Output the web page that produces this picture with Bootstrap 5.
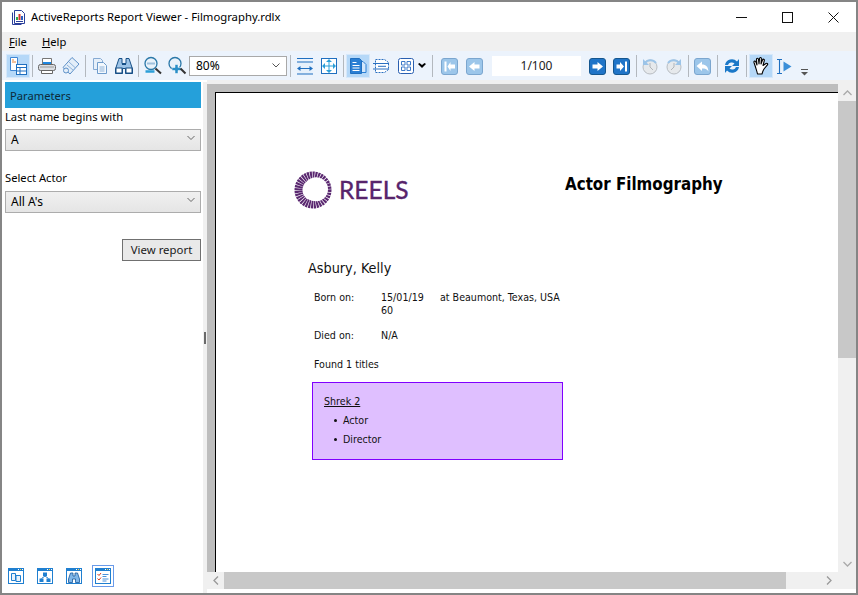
<!DOCTYPE html>
<html lang="en"><head><meta charset="utf-8"><title>ActiveReports Report Viewer</title>
<link href="https://cdn.jsdelivr.net/npm/bootstrap@5.3.0/dist/css/bootstrap.min.css" rel="stylesheet">
<style>
html,body{height:100%;margin:0;overflow:hidden}
body{background:#fff;color:#000;font:11.2px/16px "Noto Sans",sans-serif}
.win{height:595px;width:858px;border:2px solid #858585}
.titlebar{height:30px;padding-left:9px}
.titlebar .ttl{margin-left:5px;font-size:11.3px;color:#000}
.wbtn{width:46px;height:30px}
.menubar{height:19px;background:#f0f0f0;padding-left:7px;gap:15px}
.menubar u{text-underline-offset:1px}
.tools{height:29px;background:#ecf3fc;padding-left:4px}
.tb{width:24px;height:24px;flex:none}
.tb svg{width:20px;height:20px}
.tb.on{background:#b5d8f8;border:1px solid #d6e8fa}
.sp{flex:none;width:5px;height:24px}
.sp i{display:block;width:1px;height:22px;background:#b3b8be}
.sp4{width:4px}
.sp6{width:6px}
.zoomsel{width:98px;height:20px;background:#fff;border:1px solid #a9a9a9;padding:0 6px;flex:none;font-size:12px}
.pageno{width:89px;height:20px;line-height:20px;background:#fff;margin:0 5px 0 5px;flex:none;color:#222;font-size:12px}
.caret{width:14px;height:24px;flex:none;margin-left:-3px}
.navfirst{margin-left:3px}
.navprev{margin-left:1px}
.ovr{width:14px;margin-top:13px;flex:none;margin-left:4px}
.mainrow{height:510px}
.side{width:201px;flex:none;padding:2px 2px 0 3px}
.phead{height:26px;background:#25a0da;padding:1px 0 0 5px;color:#0e2a38;font-size:11.2px}
.lbl{height:19px;line-height:18px}
.combo{height:22px;border:1px solid #acacac;background:linear-gradient(#f0f0f0,#e5e5e5);padding:0 5px;font-size:12px}
.combo svg{width:8px;height:6px;margin-top:-4px}
.cb1{margin-top:2px}
.lb2{margin-top:18px}
.cb2{margin-top:3px}
.btnrow{margin-top:26px}
.vbtn{border:1px solid #707070;background:#e9e9e9;height:22px;width:79px;line-height:20px;text-align:center;color:#1a1a1a;font-size:11.4px}
.gripcol{width:4px;flex:none;background:#f0f0f0;margin-top:2px}
.grip{width:2px;height:12px;background:#6a6a6a;margin-left:1px}
.bicons{margin-top:auto;padding:0 0 4px 3px;height:30px;gap:13px}
.bi{width:16px;height:16px;flex:none}
.bi svg,.bion svg{width:16px;height:16px;display:block}
.bion{width:22px;height:22px;border:1px solid #6a9bea;background:#fff;flex:none;margin-left:-3px}
.viewer{min-width:0;padding-top:4px;background:#f0f0f0}
.vwrap{min-height:0}
.canvas{background:#bdbdbd;padding:8px 0 0 8px;overflow:hidden;min-height:0}
.sheet{background:#fff;border:solid #000;border-width:1px 0 0 1px;height:100%;padding:74px 0 0 78px;font-family:"DejaVu Sans Condensed","DejaVu Sans",sans-serif;font-size:10.6px;line-height:13px;color:#111}
.rhead{height:46px}
.logo{width:38px;height:38px;flex:none}
.reels{font:24.5px/30px "Lato",sans-serif;color:#57246b;margin-left:7px;width:69px;-webkit-text-stroke:.35px #57246b}
.rtitle{font:bold 16.8px/20px "DejaVu Sans Condensed",sans-serif;color:#000;margin-left:157px;margin-top:-12px}
.rname{font-size:14.3px;line-height:20px;margin:45px 0 0 14px;color:#111}
.facts{margin:13px 0 0 20px;width:260px}
.facts2{margin-top:12px}
.k{width:67px;flex:none}
.v1{width:59px;flex:none}
.found{margin:16px 0 0 20px}
.pbox{margin:11px 0 0 18px;width:251px;height:78px;background:#dfbfff;border:1px solid #8000ff;padding:12px 0 0 11px}
.pbox ul{margin:6px 0 0;padding:0 0 0 19px;list-style:none}
.pbox li{height:19px;line-height:13px;position:relative}
.pbox li::before{content:"";position:absolute;left:-9px;top:5px;width:3px;height:3px;border-radius:50%;background:#111}
.sv{width:18px;flex:none;background:#f0f0f0}
.sv .ar{height:17px}
.sv .th{height:257px;background:#c8c8c8}
.sh{height:17px;background:#f0f0f0}
.sh .th{width:562px;height:17px;background:#c8c8c8}
.sh .ar{width:17px}
.shr{margin-right:6px}
.foot{height:4px}
</style></head><body>
<svg width="0" height="0" class="d-none"><defs>
<symbol id="bwin" viewBox="0 0 16 16"><rect x=".5" y=".5" width="15" height="15" fill="#fff" stroke="#1f7fd0"/><rect x="0" y="0" width="16" height="3" fill="#1f7fd0"/><rect x="10" y="1" width="1" height="1" fill="#fff"/><rect x="12" y="1" width="1" height="1" fill="#f5d04a"/><rect x="14" y="1" width="1" height="1" fill="#fff"/></symbol>
</defs></svg>
<div class="win d-flex flex-column">
 <div class="titlebar d-flex align-items-center">
  <svg width="15" height="16" viewBox="0 0 15 16"><path d="M3.500 1.500h7l3 3v10h-10z" fill="#fff" stroke="#2a3f9a"/><path d="M1.500 3.500v12h9" fill="none" stroke="#2a3f9a"/><rect x="5" y="8" width="2" height="3" fill="#2fa84a"/><rect x="7.500" y="5" width="2" height="6" fill="#d8352a"/><rect x="10" y="7" width="2" height="4" fill="#2a5fc0"/><path d="M5 12.500h7" stroke="#2a3f9a"/></svg>
  <span class="ttl">ActiveReports Report Viewer - Filmography.rdlx</span>
  <div class="ms-auto d-flex">
   <div class="wbtn d-flex align-items-center justify-content-center"><svg width="11" height="11"><path d="M0 5.500h11" stroke="#111"/></svg></div>
   <div class="wbtn d-flex align-items-center justify-content-center"><svg width="11" height="11"><rect x=".5" y=".5" width="10" height="10" fill="none" stroke="#111"/></svg></div>
   <div class="wbtn d-flex align-items-center justify-content-center"><svg width="11" height="11"><path d="M.5.500l10 10M10.500.500l-10 10" stroke="#111"/></svg></div>
  </div>
 </div>
 <div class="menubar d-flex align-items-center"><span><u>F</u>ile</span><span><u>H</u>elp</span></div>
 <div class="tools d-flex align-items-center">
  <div class="tb on d-flex align-items-center justify-content-center"><svg viewBox="0 0 20 20"><path d="M2.500 1.500h7v13h-7z" fill="#fff" stroke="#3f86d4"/><path d="M4 4h2M4 6h4" stroke="#e8843a"/><rect x="8.500" y="8.500" width="10" height="10" fill="#fff" stroke="#1f6fc0"/><path d="M8.500 11.500h10M12 11.500v7M8.500 15h10" stroke="#1f6fc0"/></svg></div>
  <div class="sp d-flex justify-content-center align-items-center"><i></i></div>
  <div class="tb d-flex align-items-center justify-content-center"><svg viewBox="0 0 20 20"><path d="M5.500 2.500h9v6h-9z" fill="#fff" stroke="#777"/><path d="M6 6h8v2H6z" fill="#1c86e0"/><rect x="1.500" y="8.500" width="17" height="6" rx="2" fill="#dcdfe3" stroke="#666"/><path d="M4.500 14.500h11v3h-11z" fill="#fff" stroke="#666"/><path d="M3 11h14" stroke="#999"/></svg></div>
  <div class="tb d-flex align-items-center justify-content-center"><svg viewBox="0 0 20 20"><path d="M11 1.500l7 6.500-9 10-7-6.500z" fill="#e3eef9" stroke="#5d90c8"/><path d="M8 6l6 5.500M6 9l6 5" stroke="#8db2da"/><circle cx="5" cy="14.500" r="2.500" fill="#e3eef9" stroke="#5d90c8"/></svg></div>
  <div class="sp d-flex justify-content-center align-items-center"><i></i></div>
  <div class="tb d-flex align-items-center justify-content-center"><svg viewBox="0 0 20 20"><path d="M3.500 2.500h7l2 2v9h-9z" fill="#e6eff9" stroke="#86aad3"/><path d="M7.500 6.500h6l3 3v8h-9z" fill="#f3f8fd" stroke="#6f9ccc"/><path d="M9.500 11h5M9.500 13h5M9.500 15h5" stroke="#8fb2d8"/></svg></div>
  <div class="tb d-flex align-items-center justify-content-center"><svg viewBox="0 0 20 20"><path d="M5 2.500h3v5h4v-5h3l3.500 10.500v4.500h-7v-5h-3v5h-7V13z" fill="#9dc4e8" stroke="#164f86"/><rect x="2" y="12" width="6" height="5" fill="#fff" stroke="#164f86"/><rect x="12" y="12" width="6" height="5" fill="#fff" stroke="#164f86"/><path d="M8 8.500h4" stroke="#164f86"/></svg></div>
  <div class="sp d-flex justify-content-center align-items-center"><i></i></div>
  <div class="tb d-flex align-items-center justify-content-center"><svg viewBox="0 0 20 20"><circle cx="8" cy="7.500" r="6" fill="#e9f2fa" stroke="#2b78a8" stroke-width="1.300"/><path d="M4 6.500h8v2H4z" fill="#9ec0dd"/><path d="M2.500 15.500h9" stroke="#2c9fd8" stroke-width="2.500"/><path d="M12.500 12.500l5.500 5" stroke="#333" stroke-width="2"/></svg></div>
  <div class="tb d-flex align-items-center justify-content-center"><svg viewBox="0 0 20 20"><circle cx="8" cy="7.500" r="6" fill="#e9f2fa" stroke="#2b78a8" stroke-width="1.300"/><path d="M5 11.500h3v-3h3v3h3v3h-3v3H8v-3H5z" fill="#2a8fc8" stroke="#fff" stroke-width=".5"/><path d="M13.500 12.500l5 5" stroke="#333" stroke-width="2"/></svg></div>
  <div class="zoomsel d-flex align-items-center justify-content-between"><span>80%</span><svg width="8" height="5"><path d="M.5.500L4 4 7.500.500" fill="none" stroke="#555"/></svg></div>
  <div class="sp sp6 d-flex justify-content-center align-items-center"><i></i></div>
  <div class="tb d-flex align-items-center justify-content-center"><svg viewBox="0 0 20 20"><rect x="2.500" y="5" width="15" height="13" fill="#e6f0fb"/><path d="M2 2.500h16M2 6h16M2 18h16" stroke="#1f6fc0" stroke-width="1.200"/><path d="M3 12.500h14" stroke="#1f6fc0"/><path d="M2 12.500l3.500-2.500v5zM18 12.500l-3.500-2.500v5z" fill="#1f6fc0"/></svg></div>
  <div class="tb d-flex align-items-center justify-content-center"><svg viewBox="0 0 20 20"><rect x="2.500" y="2.500" width="15" height="15" fill="#fff" stroke="#1f6fc0"/><path d="M10 3l3 3H7zM10 17l3-3H7zM3 10l3-3v6zM17 10l-3-3v6z" fill="#2c9fd8"/><path d="M6 10h8M10 6v8" stroke="#2c9fd8"/></svg></div>
  <div class="sp d-flex justify-content-center align-items-center"><i></i></div>
  <div class="tb on d-flex align-items-center justify-content-center"><svg viewBox="0 0 20 20"><path d="M12 5.500h3l3 3v8h-6z" fill="#d3e7fb" stroke="#2a7fd4"/><path d="M2.500 2.500h9l2 2v13h-11z" fill="#2a7fd4" stroke="#1f6fc0"/><path d="M4.500 6.500h4M4.500 9.500h7M4.500 12h7M4.500 14.500h7" stroke="#fff"/></svg></div>
  <div class="tb d-flex align-items-center justify-content-center"><svg viewBox="0 0 20 20"><path d="M3.500 3.500h9l4 3v7l-4 3h-9z" fill="#fff" stroke="#2a6fc0" stroke-dasharray="2 1"/><path d="M1 7.500h16M1 13h16M6 10.300h8" stroke="#2a6fc0"/></svg></div>
  <div class="tb d-flex align-items-center justify-content-center"><svg viewBox="0 0 20 20"><rect x="2.500" y="2.500" width="15" height="15" rx="2" fill="#fff" stroke="#2a5fb0"/><path d="M5.500 5.500h3.500v3.500H5.500zM11 5.500h3.500v3.500H11zM5.500 11h3.500v3.500H5.500zM11 11h3.500v3.500H11z" fill="#fff" stroke="#3c78c8"/></svg></div>
  <div class="caret d-flex align-items-center justify-content-center"><svg width="8" height="6"><path d="M0 1l4 4 4-4-1.500-1L4 2 1.500 0z" fill="#000"/></svg></div>
  <div class="sp sp6 d-flex justify-content-center align-items-center"><i></i></div>
  <div class="tb navfirst d-flex align-items-center justify-content-center"><svg viewBox="0 0 20 20"><rect x="1.500" y="2.500" width="16" height="16" rx="2.500" fill="#9cc6ea" stroke="#7ba6cf"/><path d="M4.500 5.500h2v10h-2zM15 8.500v4h-4.500V15L7.500 10.500l3-4.500v2.500z" fill="#fff"/></svg></div>
  <div class="tb navprev d-flex align-items-center justify-content-center"><svg viewBox="0 0 20 20"><rect x="1.500" y="2.500" width="16" height="16" rx="2.500" fill="#9cc6ea" stroke="#7ba6cf"/><path d="M4 10.500L9.500 6v2.500h5v4h-5V15z" fill="#fff"/></svg></div>
  <div class="pageno text-center">1/100</div>
  <div class="tb d-flex align-items-center justify-content-center"><svg viewBox="0 0 20 20"><rect x="1.500" y="2.500" width="16" height="16" rx="2.500" fill="#1f74c8" stroke="#14568f"/><path d="M15 10.500L9.500 6v2.500h-5v4h5V15z" fill="#fff"/></svg></div>
  <div class="tb d-flex align-items-center justify-content-center"><svg viewBox="0 0 20 20"><rect x="1.500" y="2.500" width="16" height="16" rx="2.500" fill="#1f74c8" stroke="#14568f"/><path d="M13 5.500h2v10h-2zM12 10.500L8 6v2.500H4.500v4H8V15z" fill="#fff"/></svg></div>
  <div class="sp sp4 d-flex justify-content-center align-items-center"><i></i></div>
  <div class="tb d-flex align-items-center justify-content-center"><svg viewBox="0 0 20 20"><circle cx="10" cy="11" r="7" fill="#e6e9ec" stroke="#b8bdc2"/><path d="M3 3v6h6z" fill="#9cc4e8"/><path d="M5 7a7 7 0 0 1 11 0" fill="none" stroke="#9cc4e8" stroke-width="2"/><path d="M10 7v4l3 3" stroke="#b0b4b8" fill="none"/></svg></div>
  <div class="tb d-flex align-items-center justify-content-center"><svg viewBox="0 0 20 20"><circle cx="10" cy="11" r="7" fill="#e6e9ec" stroke="#b8bdc2"/><path d="M17 3v6h-6z" fill="#9cc4e8"/><path d="M4 7a7 7 0 0 1 11 0" fill="none" stroke="#9cc4e8" stroke-width="2"/><path d="M10 7v4l-3 3" stroke="#b0b4b8" fill="none"/></svg></div>
  <div class="sp d-flex justify-content-center align-items-center"><i></i></div>
  <div class="tb d-flex align-items-center justify-content-center"><svg viewBox="0 0 20 20"><rect x="1.500" y="2.500" width="16" height="16" rx="2.500" fill="#9cc6ea" stroke="#7ba6cf"/><path d="M3.500 10L9 5.500v3c4 0 6 2 6.500 7-1.500-2.500-3.500-3-6.500-3V15z" fill="#fff"/></svg></div>
  <div class="sp d-flex justify-content-center align-items-center"><i></i></div>
  <div class="tb d-flex align-items-center justify-content-center"><svg viewBox="0 0 20 20"><path d="M3 9a7 7 0 0 1 12-3.500L17 3v7h-7l2.500-2.500A4 4 0 0 0 6 9z" fill="#1a78c8"/><path d="M17 11a7 7 0 0 1-12 3.500L3 17v-7h7l-2.500 2.500A4 4 0 0 0 14 11z" fill="#1a78c8"/></svg></div>
  <div class="sp d-flex justify-content-center align-items-center"><i></i></div>
  <div class="tb on d-flex align-items-center justify-content-center"><svg viewBox="0 0 20 20"><path d="M4.500 11L3 6.500c-.4-1.500 1.300-2 1.800-.6L6 9 5.500 3.500c-.1-1.600 1.800-1.700 2-.1L8 8l.5-5.500c.2-1.500 2-1.300 1.900.2L10 8l1.500-4c.5-1.400 2.200-.8 1.800.6L12 9.500l3-2c1.300-.8 2.300.7 1.200 1.700L13 13c-1 1.500-1.500 3-2 5H6.500c-.5-2.500-1.200-4.500-2-7z" fill="#fff" stroke="#000" stroke-width="1.100" stroke-linejoin="round"/></svg></div>
  <div class="tb d-flex align-items-center justify-content-center"><svg viewBox="0 0 20 20"><path d="M2 3.500h5M2 17.500h5M4.500 3.500v14" fill="none" stroke="#1f6fc0" stroke-width="1.100"/><path d="M8.500 5.500l8 5-8 5z" fill="#3c8fd8"/></svg></div>
  <div class="ovr"><svg width="7" height="7" class="d-block"><path d="M0 .5h7" stroke="#555"/><path d="M0 3l3.500 3.500L7 3z" fill="#555"/></svg></div>
 </div>
 <div class="mainrow d-flex flex-grow-1">
  <div class="side d-flex flex-column">
   <div class="phead d-flex align-items-center">Parameters</div>
   <div class="lbl">Last name begins with</div>
   <div class="combo cb1 d-flex align-items-center justify-content-between"><span>A</span><svg viewBox="0 0 8 6"><path d="M.5 1L4 4.500 7.500 1" fill="none" stroke="#666"/></svg></div>
   <div class="lbl lb2">Select Actor</div>
   <div class="combo cb2 d-flex align-items-center justify-content-between"><span>All A's</span><svg viewBox="0 0 8 6"><path d="M.5 1L4 4.500 7.500 1" fill="none" stroke="#666"/></svg></div>
   <div class="btnrow d-flex justify-content-end"><div class="vbtn">View report</div></div>
   <div class="bicons d-flex align-items-center">
    <div class="bi"><svg viewBox="0 0 16 16"><use href="#bwin"/><path d="M3.500 5.500h4v7h-4zM8 7.500h4.500v6H8z" fill="#e8f2fb" stroke="#1f7fd0"/></svg></div>
    <div class="bi"><svg viewBox="0 0 16 16"><use href="#bwin"/><rect x="6" y="4.500" width="4" height="3.500" fill="#1f7fd0"/><rect x="2.500" y="10.500" width="4" height="3.500" fill="#1f7fd0"/><rect x="9.500" y="10.500" width="4" height="3.500" fill="#1f7fd0"/><path d="M8 8l-3.500 2.500M8 8l3.500 2.500" stroke="#1f7fd0" fill="none"/></svg></div>
    <div class="bi"><svg viewBox="0 0 16 16"><use href="#bwin"/><path d="M4.500 5h2.500v3h2V5h2.500l2 6v3.500h-4V11h-3v3.500h-4V11z" fill="#7fb6e8" stroke="#14569a" stroke-width=".8"/></svg></div>
    <div class="bion d-flex align-items-center justify-content-center"><svg viewBox="0 0 16 16"><use href="#bwin"/><path d="M2.500 6l1.500 1.500L6 5M2.500 10.500L4 12l2-2.500" fill="none" stroke="#d93a1e"/><path d="M7.500 6.500h6M7.500 8.500h4M7.500 11h6M7.500 13h4" stroke="#4a90d9"/></svg></div>
   </div>
  </div>
  <div class="gripcol d-flex align-items-center"><div class="grip"></div></div>
  <div class="viewer flex-grow-1 d-flex flex-column">
   <div class="vwrap d-flex flex-grow-1">
    <div class="canvas flex-grow-1">
     <div class="sheet">
      <div class="rhead d-flex align-items-center">
       <svg class="logo" viewBox="0 0 38 38"><circle cx="19" cy="19" r="14.500" fill="none" stroke="#5a2870" stroke-width="8" stroke-dasharray="1.900 .6"/><circle cx="22" cy="18.300" r="12" fill="#fff"/></svg>
       <div class="reels">REELS</div>
       <div class="rtitle">Actor Filmography</div>
      </div>
      <div class="rname">Asbury, Kelly</div>
      <div class="facts d-flex"><div class="k">Born on:</div><div class="v1">15/01/19<br>60</div><div>at Beaumont, Texas, USA</div></div>
      <div class="facts facts2 d-flex"><div class="k">Died on:</div><div>N/A</div></div>
      <div class="found">Found 1 titles</div>
      <div class="pbox"><u>Shrek 2</u><ul><li>Actor</li><li>Director</li></ul></div>
     </div>
    </div>
    <div class="sv d-flex flex-column"><div class="ar d-flex align-items-center justify-content-center"><svg width="9" height="6"><path d="M.5 5L4.500 1l4 4" fill="none" stroke="#aaa" stroke-width="1.300"/></svg></div><div class="th"></div><div class="flex-grow-1"></div><div class="ar d-flex align-items-center justify-content-center"><svg width="9" height="6"><path d="M.5 1l4 4 4-4" fill="none" stroke="#aaa" stroke-width="1.300"/></svg></div></div>
   </div>
   <div class="sh d-flex"><div class="ar d-flex align-items-center justify-content-center"><svg width="6" height="9"><path d="M5 .5l-4 4 4 4" fill="none" stroke="#999" stroke-width="1.300"/></svg></div><div class="th"></div><div class="flex-grow-1 d-flex align-items-center justify-content-end"><svg class="shr" width="6" height="9"><path d="M1 .5l4 4-4 4" fill="none" stroke="#999" stroke-width="1.300"/></svg></div><div class="sv"></div></div>
   <div class="foot bg-white"></div>
  </div>
 </div>
</div>
</body></html>
